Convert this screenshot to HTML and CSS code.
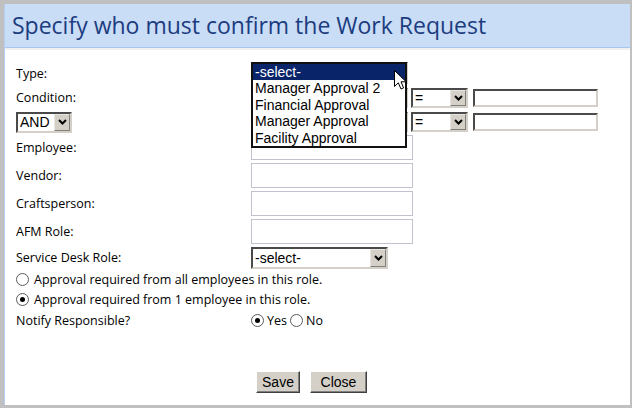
FILE: index.html
```html
<!DOCTYPE html>
<html>
<head>
  <meta charset="utf-8">
  <title>Specify who must confirm the Work Request</title>
  <link rel="stylesheet" href="styles.css">
</head>
<body>
  <div class="dialog">
    <div class="title">Specify who must confirm the Work Request</div>

    <div class="form">
      <div class="row row-type">
        <span class="label">Type:</span>
        <div class="sel sel-type"><span class="sel-text">-select-</span><span class="sel-btn"><svg width="9" height="6" viewBox="0 0 9 6"><path d="M1 1l3.5 3.5L8 1" stroke="#000" stroke-width="2" fill="none"/></svg></span></div>

        <!-- open dropdown of the Type select -->
        <div class="droplist">
          <div class="opt active">-select-</div>
          <div class="opt">Manager Approval 2</div>
          <div class="opt">Financial Approval</div>
          <div class="opt">Manager Approval</div>
          <div class="opt">Facility Approval</div>
        </div>
        <svg class="cursor" width="13" height="20" viewBox="0 0 13 20"><path d="M0.5 0.5V16.5L4.3 12.8L7 19L9.6 17.9L7 11.8H12.2Z" fill="#fff" stroke="#000" stroke-width="1"/></svg>
      </div>

      <div class="row row-cond">
        <span class="label">Condition:</span>
        <div class="sel sel-field"><span class="sel-text"></span><span class="sel-btn"><svg width="9" height="6" viewBox="0 0 9 6"><path d="M1 1l3.5 3.5L8 1" stroke="#000" stroke-width="2" fill="none"/></svg></span></div>
        <div class="sel sel-op"><span class="sel-text">=</span><span class="sel-btn"><svg width="9" height="6" viewBox="0 0 9 6"><path d="M1 1l3.5 3.5L8 1" stroke="#000" stroke-width="2" fill="none"/></svg></span></div>
        <div class="inset-box"></div>
      </div>

      <div class="row row-and">
        <span class="label"><span class="sel sel-and"><span class="sel-text">AND</span><span class="sel-btn"><svg width="9" height="6" viewBox="0 0 9 6"><path d="M1 1l3.5 3.5L8 1" stroke="#000" stroke-width="2" fill="none"/></svg></span></span></span>
        <div class="sel sel-field"><span class="sel-text"></span><span class="sel-btn"><svg width="9" height="6" viewBox="0 0 9 6"><path d="M1 1l3.5 3.5L8 1" stroke="#000" stroke-width="2" fill="none"/></svg></span></div>
        <div class="sel sel-op"><span class="sel-text">=</span><span class="sel-btn"><svg width="9" height="6" viewBox="0 0 9 6"><path d="M1 1l3.5 3.5L8 1" stroke="#000" stroke-width="2" fill="none"/></svg></span></div>
        <div class="inset-box"></div>
      </div>

      <div class="row row-text first">
        <span class="label">Employee:</span>
        <div class="textbox"></div>
      </div>
      <div class="row row-text">
        <span class="label">Vendor:</span>
        <div class="textbox"></div>
      </div>
      <div class="row row-text">
        <span class="label">Craftsperson:</span>
        <div class="textbox"></div>
      </div>
      <div class="row row-text">
        <span class="label">AFM Role:</span>
        <div class="textbox"></div>
      </div>

      <div class="row row-sd">
        <span class="label">Service Desk Role:</span>
        <div class="sel sel-sd"><span class="sel-text">-select-</span><span class="sel-btn"><svg width="9" height="6" viewBox="0 0 9 6"><path d="M1 1l3.5 3.5L8 1" stroke="#000" stroke-width="2" fill="none"/></svg></span></div>
      </div>

      <div class="row row-radio">
        <span class="radio"></span><span class="radio-label">Approval required from all employees in this role.</span>
      </div>
      <div class="row row-radio">
        <span class="radio on"></span><span class="radio-label">Approval required from 1 employee in this role.</span>
      </div>

      <div class="row row-notify">
        <span class="label">Notify Responsible?</span>
        <span class="radio on"></span><span class="radio-label">Yes</span>
        <span class="radio"></span><span class="radio-label">No</span>
      </div>
    </div>

    <div class="actions">
      <button class="btn btn-save">Save</button>
      <button class="btn btn-close">Close</button>
    </div>
  </div>
</body>
</html>
```

FILE: styles.css
```css
body {
  margin: 0;
  background: #C0C0C0;
  font-family: "Open Sans", Lato, sans-serif;
  font-size: 12.5px;
  color: #000;
}

.dialog {
  margin: 4px 2px 3px 4px;
  width: 625px;
  height: 401px;
  background: #FFF;
  border-left: 1px solid #B4CEF2;
}

.title {
  height: 43px;
  line-height: 43px;
  padding-left: 7px;
  background: #C9DDF6;
  border-bottom: 1px solid #A9C6EE;
  box-shadow: 0 2px 0 #F0F0F0;
  font-family: "Open Sans", sans-serif;
  font-size: 23px;
  color: #1C3C80;
  white-space: nowrap;
}

.form {
  padding: 13px 0 0 11px;
}

.row {
  display: flex;
  align-items: center;
}

.label {
  width: 235px;
  flex: none;
}

.row-type { height: 24px; position: relative; }
.row-cond { height: 25px; }
.row-and { height: 24px; }
.row-text { height: 28px; }
.row-text.first { height: 27px; }
.row-sd { height: 25px; }
.row-radio { height: 19px; }
.row-radio + .row-radio { height: 20px; }
.row-notify { height: 23px; }

/* classic select boxes */
.sel {
  display: flex;
  box-sizing: border-box;
  background: #FFF;
  border: 2px solid;
  border-color: #4A4A4A #D4D0C8 #D4D0C8 #4A4A4A;
  font-family: "Liberation Sans", Arial, sans-serif;
  font-size: 14px;
  color: #000;
}

.sel-text {
  flex: 1;
  padding-left: 2px;
  overflow: hidden;
  white-space: nowrap;
}

.sel-btn {
  width: 16px;
  flex: none;
  box-sizing: border-box;
  background: #D4D0C8;
  border: 1px solid;
  border-color: #E8E6E0 #808080 #808080 #E8E6E0;
  display: flex;
  align-items: center;
  justify-content: center;
}

.sel-type { width: 157px; height: 22px; }
.sel-field { width: 157px; height: 20px; }
.sel-op { width: 57px; height: 20px; margin-left: 3px; line-height: 16px; }
.sel-and { width: 56px; height: 21px; line-height: 17px; }
.sel-sd { width: 137px; height: 22px; line-height: 18px; }

.inset-box {
  width: 125px;
  height: 18px;
  margin-left: 5px;
  box-sizing: border-box;
  border: 2px solid;
  border-color: #4A4A4A #D4D0C8 #D4D0C8 #4A4A4A;
}

.textbox {
  width: 162px;
  height: 25px;
  box-sizing: border-box;
  border: 1px solid #C2C2CE;
}

/* open list of the Type select */
.droplist {
  position: absolute;
  left: 235px;
  top: 1px;
  width: 156px;
  box-sizing: border-box;
  border: 2px solid #111;
  background: #FFF;
  font-family: "Liberation Sans", Arial, sans-serif;
  font-size: 14px;
  color: #000;
  z-index: 2;
}

.opt {
  height: 16.4px;
  line-height: 16px;
  padding-left: 2px;
  white-space: nowrap;
}

.opt.active {
  background: #0A246A;
  color: #FFF;
}

.cursor {
  position: absolute;
  left: 378px;
  top: 9px;
  z-index: 3;
}

/* radios */
.radio {
  width: 13px;
  height: 13px;
  flex: none;
  box-sizing: border-box;
  border: 1px solid #5A5A5A;
  border-radius: 50%;
  background: #FFF;
  display: flex;
  align-items: center;
  justify-content: center;
}

.radio.on::after {
  content: "";
  width: 5px;
  height: 5px;
  border-radius: 50%;
  background: #000;
}

.radio-label {
  margin-left: 5px;
  white-space: nowrap;
}

.row-notify .radio-label {
  margin-left: 3px;
  margin-right: 3px;
}

.actions {
  display: flex;
  gap: 10px;
  margin-top: 39px;
  padding-left: 251px;
}

.btn {
  height: 22px;
  padding: 0;
  box-sizing: border-box;
  background: #D4D0C8;
  border: 1px solid;
  border-color: #FFF #404040 #404040 #FFF;
  box-shadow: inset -1px -1px 0 #808080;
  font-family: "Liberation Sans", Arial, sans-serif;
  font-size: 14px;
  color: #000;
}

.btn-save { width: 44px; }
.btn-close { width: 57px; }
```
